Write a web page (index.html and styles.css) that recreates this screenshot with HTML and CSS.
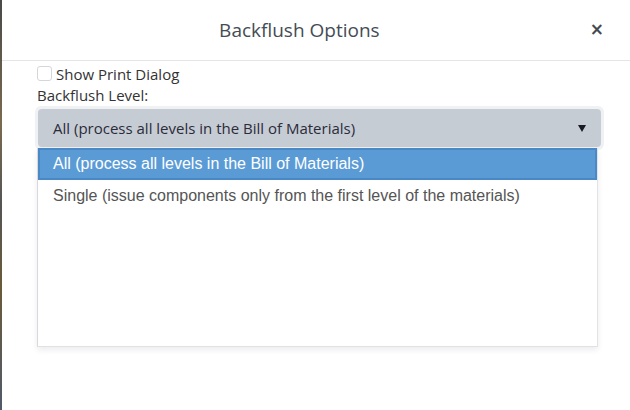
FILE: index.html
```html
<!DOCTYPE html>
<html>
<head>
<meta charset="utf-8">
<link rel="stylesheet" href="styles.css">
</head>
<body>
<div class="backdrop-edge"></div>
<div class="modal">
  <div class="modal-header">
    <div class="modal-title">Backflush Options</div>
    <div class="close">&#xD7;</div>
  </div>
  <div class="modal-body">
    <label class="check-row"><span class="checkbox"></span><span>Show Print Dialog</span></label>
    <div class="field-label">Backflush Level:</div>
    <div class="select-ring">
      <div class="select">
        <span class="select-value">All (process all levels in the Bill of Materials)</span>
        <span class="caret"></span>
      </div>
    </div>
    <div class="listbox">
      <div class="option selected">All (process all levels in the Bill of Materials)</div>
      <div class="option">Single (issue components only from the first level of the materials)</div>
    </div>
  </div>
</div>
</body>
</html>
```

FILE: styles.css
```css
html, body {
  margin: 0;
  padding: 0;
  height: 100%;
  background: #ffffff;
}
body {
  display: flex;
  font-family: "Open Sans", "Noto Sans", sans-serif;
  color: #333;
}
.backdrop-edge {
  width: 2px;
  background: linear-gradient(#4a4a4a, #7a6a50 30%, #555 50%, #6b5a3a 70%, #505a6a);
  flex: none;
}
.modal {
  flex: 1;
  background: #fff;
  display: flex;
  flex-direction: column;
}
.modal-header {
  height: 60px;
  border-bottom: 1px solid #e5e5e5;
  display: flex;
  align-items: center;
}
.modal-title {
  flex: 1;
  text-align: center;
  font-size: 19px;
  color: #454c55;
  padding-bottom: 1px;
  padding-left: 7px;
}
.close {
  font-family: "DejaVu Sans", sans-serif;
  font-size: 17px;
  font-weight: bold;
  color: #444a52;
  margin-right: 26px;
  margin-bottom: 2px;
}
.modal-body {
  padding: 4px 30px 0 35px;
  display: flex;
  flex-direction: column;
}
.check-row {
  display: flex;
  align-items: center;
  gap: 4px;
  font-size: 15px;
  height: 17px;
  color: #333;
}
.checkbox {
  width: 13px;
  height: 13px;
  border: 1px solid #d3d6db;
  border-radius: 3px;
  background: #fff;
  flex: none;
}
.field-label {
  font-size: 15px;
  margin-top: 5px;
  height: 17px;
  line-height: 17px;
  color: #333;
}
.select-ring {
  margin-top: 2px;
  margin-left: -2px;
  margin-right: -4px;
  padding: 3px;
  background: #f0f1f3;
  border-radius: 6px;
}
.select {
  height: 38px;
  background: #c6ccd4;
  border-radius: 4px;
  display: flex;
  align-items: center;
  padding: 0 15px 0 15px;
}
.select-value {
  flex: 1;
  font-size: 15px;
  color: #2b2b3a;
}
.caret {
  width: 0;
  height: 0;
  border-left: 4px solid transparent;
  border-right: 4px solid transparent;
  border-top: 7px solid #1a1a22;
}
.listbox {
  margin-top: -2px;
  margin-left: 0;
  margin-right: 2px;
  height: 198px;
  background: #fff;
  border-left: 1px solid #d6d9e2;
  border-right: 1px solid #e2e3e8;
  border-bottom: 1px solid #e0e1e6;
  box-shadow: 0 3px 6px rgba(0,0,0,0.08);
  font-family: "Liberation Sans", Arial, sans-serif;
  font-size: 16px;
}
.option {
  height: 32px;
  display: flex;
  align-items: center;
  padding-left: 15px;
  color: #555;
  box-sizing: border-box;
}
.option.selected {
  background: #5a9bd6;
  border: 2px solid #4a88c6;
  padding-left: 13px;
  color: #fff;
  height: 32px;
}
```
